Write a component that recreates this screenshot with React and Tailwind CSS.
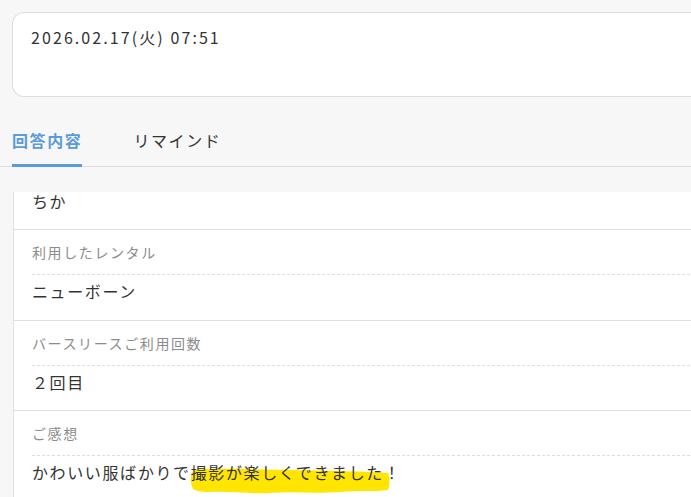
import React from "react";

function Dashed() {
  return (
    <div className="h-px w-full bg-[repeating-linear-gradient(to_right,#dddddd_0px,#dddddd_3px,transparent_3px,transparent_5px)]" />
  );
}

function Row({ label, tall, children }) {
  return (
    <div className="border-b border-[#e0e0e0] pl-[18px]">
      <div className="pt-[12px] pb-[12px] text-[14px] leading-5 text-[#8c8c8c]">{label}</div>
      <Dashed />
      <div
        className={
          tall
            ? "pt-[4px] pb-[17px] text-[16px] leading-6 text-[#333]"
            : "pt-[4px] pb-[16px] text-[16px] leading-6 text-[#333]"
        }
      >
        {children}
      </div>
    </div>
  );
}

export default function App() {
  return (
    <div
      className="h-[497px] w-[691px] overflow-hidden bg-[#f7f7f7] tracking-[0.1em]"
      style={{ fontFamily: '"Noto Sans CJK JP", "Noto Sans", sans-serif' }}
    >
      <div className="ml-[12px] mt-[12px] h-[85px] rounded-l-[12px] border border-r-0 border-[#dedede] bg-white pl-[18px] pt-[12px] text-[16px] leading-6 tracking-[0.13em] text-[#333]">
        2026.02.17(火) 07:51
      </div>

      <div className="mt-[31px] flex gap-[51px] border-b border-[#dedede] pl-[12px]">
        <div className="relative pb-[14px] text-[16px] font-bold leading-6 text-[#5b9bd8]">
          回答内容
          <div className="absolute bottom-[-1px] left-0 h-[3px] w-[70px] bg-[#5b9bd8]" />
        </div>
        <div className="pb-[14px] text-[16px] leading-6 text-[#333]">リマインド</div>
      </div>

      <div className="ml-[13px] mt-[25px] h-[320px] border-l border-[#e0e0e0] bg-white">
        <div className="flex h-[38px] flex-col justify-end border-b border-[#e0e0e0] pb-[18px] pl-[18px] text-[16px] leading-5 text-[#333]">
          ちか
        </div>
        <Row label="利用したレンタル" tall>
          ニューボーン
        </Row>
        <Row label="バースリースご利用回数">２回目</Row>
        <Row label="ご感想">
          かわいい服ばかりで
          <span className="relative inline-block">
            <svg
              className="absolute left-[-2px] top-[5px] h-[30px] w-[202px]"
              viewBox="0 0 202 30"
              preserveAspectRatio="none"
            >
              <path
                d="M5,5 C25,3 60,4 100,5 C140,6 170,6 199,8 C201,12 201,20 199,25 C185,27 170,25 150,27 C125,29 105,26 80,28 C60,29 40,26 20,27 C12,27 7,26 4,24 C1,18 1,9 5,5 Z"
                fill="#ffe500"
              />
            </svg>
            <span className="relative">撮影が楽しくできました！</span>
          </span>
        </Row>
      </div>
    </div>
  );
}
